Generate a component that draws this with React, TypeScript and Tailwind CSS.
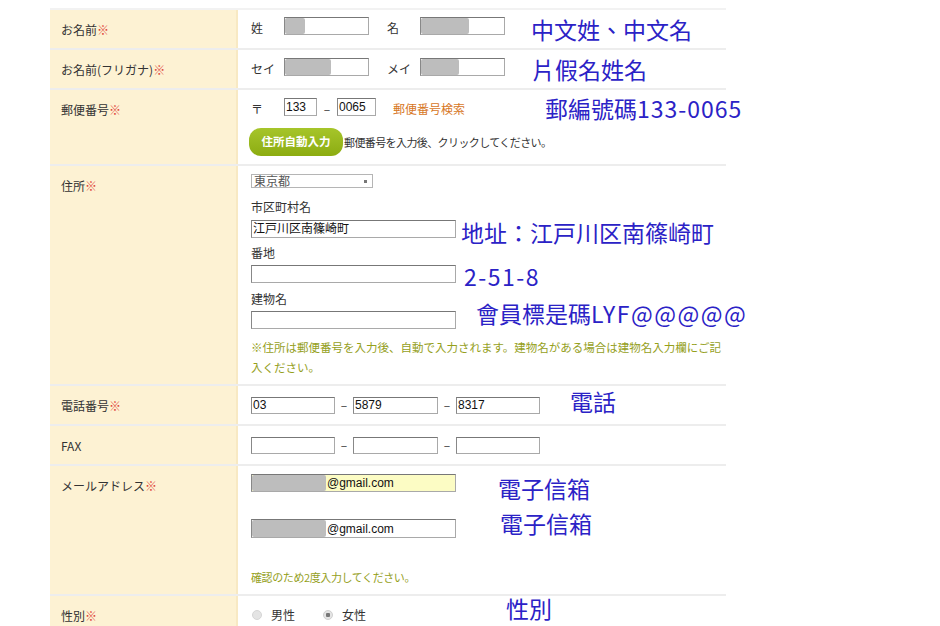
import React from 'react';

const jp = { fontFamily: '"Noto Sans CJK JP", "Liberation Sans", sans-serif' };
const tc = { fontFamily: '"Noto Sans CJK TC", "Liberation Sans", sans-serif' };

const Req = () => <span className="text-[#e0463c]">※</span>;

const Label = ({ children }: { children: React.ReactNode }) => (
  <div className="w-[188px] shrink-0 bg-[#fdf2d3] border-r-2 border-[#f8e9c3] pl-[11px] pt-[12px] text-[12px] leading-[16px] text-[#333]">
    {children}
  </div>
);

const Field = ({
  w,
  h = 18,
  value,
  blur,
  yellow,
}: {
  w: number;
  h?: number;
  value?: string;
  blur?: number;
  yellow?: boolean;
}) => (
  <div
    className={`shrink-0 flex items-center border border-[#a9a9a9] border-t-[#777] border-l-[#888] overflow-hidden text-[12px] text-[#111] ${yellow ? 'bg-[#fcfcc4]' : 'bg-white'}`}
    style={{ width: w, height: h, fontFamily: '"Liberation Sans", "Noto Sans CJK JP", sans-serif' }}
  >
    {blur ? <span className="h-full bg-[#bdbdbd] rounded-[2px] shrink-0" style={{ width: blur }} /> : null}
    {value ? <span className="pl-[1px] leading-none">{value}</span> : null}
  </div>
);

const Row = ({ h, children }: { h: number; children: React.ReactNode }) => (
  <div className="flex border-b-2 border-[rgba(0,0,0,0.07)]" style={{ height: h }}>
    {children}
  </div>
);

export default function App() {
  return (
    <div className="relative w-[940px] h-[626px] overflow-hidden bg-white" style={jp}>
      <div className="ml-[50px] mt-[8px] w-[676px] border-t-2 border-[rgba(0,0,0,0.05)]">
        <Row h={40}>
          <Label>
            お名前<Req />
          </Label>
          <div className="flex items-end pl-[13px] pt-[7px] h-[25px] text-[12px] text-[#333]">
            <span className="w-[33px] leading-[14px]">姓</span>
            <Field w={85} blur={20} />
            <span className="ml-[18px] w-[33px] leading-[14px]">名</span>
            <Field w={85} blur={48} />
          </div>
        </Row>
        <Row h={40}>
          <Label>
            お名前(フリガナ)<Req />
          </Label>
          <div className="flex items-end pl-[13px] pt-[8px] h-[26px] text-[12px] text-[#333]">
            <span className="w-[33px] leading-[14px]">セイ</span>
            <Field w={85} blur={46} />
            <span className="ml-[18px] w-[33px] leading-[14px]">メイ</span>
            <Field w={85} blur={38} />
          </div>
        </Row>
        <Row h={76}>
          <Label>
            郵便番号<Req />
          </Label>
          <div className="flex flex-col pl-[11px] pt-[8px] text-[12px] text-[#333]">
            <div className="flex items-end h-[18px]">
              <span className="w-[35px] pl-[2px] leading-[14px]">〒</span>
              <Field w={33} value="133" />
              <span className="w-[20px] text-center leading-[14px]">–</span>
              <Field w={39} value="0065" />
              <span className="ml-[17px] leading-[14px] text-[#d7771f]">郵便番号検索</span>
            </div>
            <div className="flex items-center mt-[12px]">
              <div className="w-[94px] h-[28px] rounded-[12px] bg-gradient-to-b from-[#a6c52a] to-[#8cac10] flex items-center justify-center text-white font-bold text-[11.5px]">
                住所自動入力
              </div>
              <span className="ml-[1px] text-[11px] tracking-[-0.6px]">郵便番号を入力後、クリックしてください。</span>
            </div>
          </div>
        </Row>
        <Row h={220}>
          <Label>
            住所<Req />
          </Label>
          <div className="flex flex-col pl-[13px] pt-[8px] text-[12px] text-[#333] w-[486px]">
            <div className="w-[122px] h-[14px] border border-[#b5b5b5] flex items-center justify-between pl-[2px] pr-[5px] text-[12px] leading-none text-[#555]">
              <span>東京都</span>
              <span className="w-[3px] h-[3px] bg-[#777]" />
            </div>
            <div className="mt-[11px] leading-[16px]">市区町村名</div>
            <div className="mt-[5px]">
              <Field w={205} value="江戸川区南篠崎町" />
            </div>
            <div className="mt-[7px] leading-[16px]">番地</div>
            <div className="mt-[4px]">
              <Field w={205} />
            </div>
            <div className="mt-[8px] leading-[16px]">建物名</div>
            <div className="mt-[4px]">
              <Field w={205} />
            </div>
            <div className="mt-[8px] leading-[20px] text-[#95a01c] text-[11.5px] whitespace-nowrap">
              <div>※住所は郵便番号を入力後、自動で入力されます。建物名がある場合は建物名入力欄にご記</div>
              <div>入ください。</div>
            </div>
          </div>
        </Row>
        <Row h={40}>
          <Label>
            電話番号<Req />
          </Label>
          <div className="flex items-center pl-[13px] pt-[11px] h-[27px] text-[12px] text-[#333]">
            <Field w={84} h={17} value="03" />
            <span className="w-[18px] text-center">–</span>
            <Field w={85} h={17} value="5879" />
            <span className="w-[18px] text-center">–</span>
            <Field w={84} h={17} value="8317" />
          </div>
        </Row>
        <Row h={40}>
          <Label>FAX</Label>
          <div className="flex items-center pl-[13px] pt-[11px] h-[27px] text-[12px] text-[#333]">
            <Field w={84} h={17} />
            <span className="w-[18px] text-center">–</span>
            <Field w={85} h={17} />
            <span className="w-[18px] text-center">–</span>
            <Field w={84} h={17} />
          </div>
        </Row>
        <Row h={130}>
          <Label>
            メールアドレス<Req />
          </Label>
          <div className="flex flex-col pl-[13px] pt-[8px] text-[12px] text-[#333]">
            <Field w={205} yellow blur={74} value="@gmail.com" />
            <div className="mt-[27px]">
              <Field w={205} h={19} blur={74} value="@gmail.com" />
            </div>
            <div className="mt-[31px] leading-[16px] text-[#95a01c] text-[11px] tracking-[-0.4px]">確認のため2度入力してください。</div>
          </div>
        </Row>
        <div className="flex h-[60px]">
          <Label>
            性別<Req />
          </Label>
          <div className="flex items-center pl-[14px] pt-[8px] h-[30px] text-[12px] text-[#333]">
            <span className="w-[10px] h-[10px] rounded-full bg-[#e4e4e4] border border-[#d6d6d6]" />
            <span className="ml-[9px]">男性</span>
            <span className="ml-[28px] w-[10px] h-[10px] rounded-full bg-[#e4e4e4] border border-[#d0d0d0] flex items-center justify-center">
              <span className="w-[4px] h-[4px] bg-[#777] rounded-[1px]" />
            </span>
            <span className="ml-[9px]">女性</span>
          </div>
        </div>
      </div>

      {/* hand-written notes laid over the screenshot */}
      <div className="text-[#2b22c6] text-[23px] leading-none whitespace-nowrap" style={tc}>
        <div className="absolute left-[531px] top-[18px]">中文姓、中文名</div>
        <div className="absolute left-[532px] top-[58px]">片假名姓名</div>
        <div className="absolute left-[545px] top-[97px]">
          郵編號碼<span className="tracking-[1px]">133-0065</span>
        </div>
        <div className="absolute left-[461px] top-[221px]">地址：江戸川区南篠崎町</div>
        <div className="absolute left-[464px] top-[265px] tracking-[1.5px]">2-51-8</div>
        <div className="absolute left-[476px] top-[302px]">
          會員標是碼<span className="tracking-[1.5px]">LYF@@@@@</span>
        </div>
        <div className="absolute left-[570px] top-[390px]">電話</div>
        <div className="absolute left-[498px] top-[477px]">電子信箱</div>
        <div className="absolute left-[500px] top-[512px]">電子信箱</div>
        <div className="absolute left-[506px] top-[597px]">性別</div>
      </div>
    </div>
  );
}
